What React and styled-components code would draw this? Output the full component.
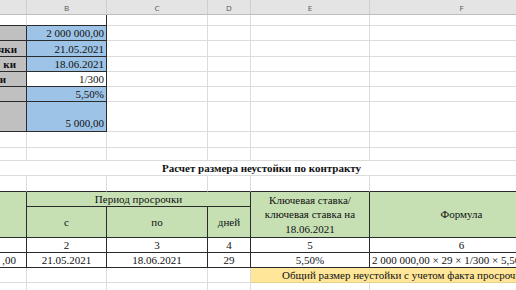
import React from 'react';
import styled, { createGlobalStyle } from 'styled-components';

const GRID = '#dcdcdc';
const DARK = '#2b2b2b';

const GlobalStyle = createGlobalStyle`
	html, body {
		margin: 0;
		padding: 0;
		background: #fff;
		overflow: hidden;
	}
`;

const Sheet = styled.div`
	display: grid;
	grid-template-columns: 27px 80px 101px 43px 119px 184px;
	grid-template-rows: 15px 11px 15px 16px 15px 15px 15px 30px 16px 13px 15px 16px 15px 31px 15px 15px 15px 15px;
	width: 554px;
	font-family: "Liberation Serif", "Times New Roman", serif;
	font-size: 11px;
	color: #111;
`;

const Cell = styled.div`
	box-sizing: border-box;
	display: flex;
	align-items: ${p => p.$v === 'end' ? 'flex-end' : 'center'};
	justify-content: ${p => p.$align === 'right' ? 'flex-end' : p.$align === 'center' ? 'center' : 'flex-start'};
	text-align: ${p => p.$align || 'left'};
	grid-column: ${p => p.$span ? `span ${p.$span}` : 'auto'};
	grid-row: ${p => p.$rows ? `span ${p.$rows}` : 'auto'};
	background: ${p => p.$bg || '#fff'};
	border-right: 1px solid ${p => p.$r ? DARK : GRID};
	border-bottom: 1px solid ${p => p.$b ? DARK : GRID};
	padding: ${p => p.$v === 'end' ? '0 2px 1px' : '0 2px'};
	padding-left: ${p => p.$pl != null ? p.$pl + 'px' : '2px'};
	padding-right: ${p => p.$pr != null ? p.$pr + 'px' : '2px'};
	white-space: nowrap;
	overflow: hidden;
	line-height: 14px;
	font-weight: ${p => p.$bold ? 700 : 400};
`;

const ColHead = styled.div`
	box-sizing: border-box;
	display: flex;
	align-items: center;
	justify-content: center;
	background: #e4e4e4;
	border-right: 1px solid #cfcfcf;
	border-bottom: 1px solid #bdbdbd;
	font-family: "Open Sans", "Liberation Sans", sans-serif;
	font-size: 8px;
	color: #555;
`;

// grey label cells; only the ends of the long captions fit in this narrow column
const Label = styled(Cell).attrs({ $bg: '#c0c0c0', $bold: true, $align: 'right', $r: true, $b: true, $pl: 0 })``;

const Input = styled(Cell).attrs(p => ({ $bg: p.$plain ? '#fff' : '#9dc3e6', $align: 'right', $r: true, $b: true }))``;

const Head = styled(Cell).attrs({ $bg: '#c6e0b4', $align: 'center', $r: true, $b: true })`
	white-space: normal;
	line-height: 14.5px;
`;

const Boxed = styled(Cell).attrs(p => ({ $align: p.$align || 'center', $r: true, $b: true }))``;

const Title = styled(Cell).attrs({ $align: 'center', $bold: true, $span: 6 })`
	padding-right: 32px;
`;

const Total = styled(Cell).attrs({ $bg: '#ffe699', $span: 2, $pl: 31 })`
	border-right-color: #f0d78a;
	border-bottom-color: #e8d08a;
`;

const Blank = ({ n = 1, ...rest }) => (
	<>
		{Array.from({ length: n }).map((_, i) => <Cell key={i} {...rest} />)}
	</>
);

const letters = ['', 'B', 'C', 'D', 'E', 'F'];

export default function App() {
	return (
		<>
			<GlobalStyle />
			<Sheet>
				{letters.map((l, i) => <ColHead key={i}>{l}</ColHead>)}

				{/* row 1 */}
				<Cell $b />
				<Cell $b $r />
				<Blank n={4} />

				{/* inputs */}
				<Label />
				<Input>2 000 000,00</Input>
				<Blank n={4} />

				<Label $pr={9}>чки</Label>
				<Input>21.05.2021</Input>
				<Blank n={4} />

				<Label $pr={10}>ки</Label>
				<Input>18.06.2021</Input>
				<Blank n={4} />

				<Label $pr={20}>и</Label>
				<Input $plain>1/300</Input>
				<Blank n={4} />

				<Label />
				<Input>5,50%</Input>
				<Blank n={4} />

				<Label />
				<Input $v="end">5 000,00</Input>
				<Blank n={4} />

				<Blank n={6} />
				<Blank n={6} />

				<Title>Расчет размера неустойки по контракту</Title>

				{/* row above the table carries its top border */}
				<Blank n={6} $b />

				{/* table head */}
				<Head $rows={2} />
				<Head $span={3}>Период просрочки</Head>
				<Head $rows={2}>Ключевая ставка/<br />ключевая ставка на<br />18.06.2021</Head>
				<Head $rows={2}>Формула</Head>
				<Head>с</Head>
				<Head>по</Head>
				<Head>дней</Head>

				{/* column numbers */}
				<Boxed />
				<Boxed>2</Boxed>
				<Boxed>3</Boxed>
				<Boxed>4</Boxed>
				<Boxed>5</Boxed>
				<Boxed>6</Boxed>

				{/* data */}
				<Boxed $align="right" $pr={10}>,00</Boxed>
				<Boxed>21.05.2021</Boxed>
				<Boxed>18.06.2021</Boxed>
				<Boxed>29</Boxed>
				<Boxed>5,50%</Boxed>
				<Boxed $align="left" $pl={2}>2 000 000,00 × 29 × 1/300 × 5,50%</Boxed>

				<Blank n={4} />
				<Total>Общий размер неустойки с учетом факта просрочки</Total>

				<Blank n={6} />
			</Sheet>
		</>
	);
}
